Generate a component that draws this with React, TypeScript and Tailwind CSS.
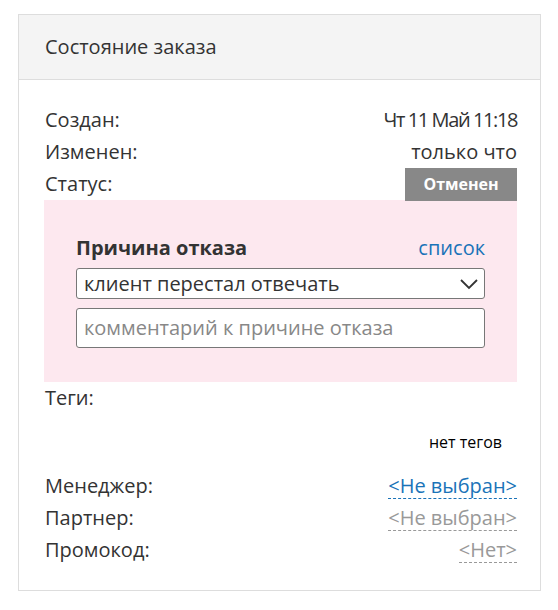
const font = { fontFamily: '"Open Sans", Lato, sans-serif' }

function Row({ label, children }: { label: string; children: React.ReactNode }) {
  return (
    <div className="flex items-center justify-between h-8">
      <span>{label}</span>
      {children}
    </div>
  )
}

export default function App() {
  return (
    <div className="bg-white w-[558px] h-[610px] pt-[14px] pl-[18px]" style={font}>
      <div className="w-[523px] h-[577px] border border-[#dddddd] text-[20px] text-[#333333]">
        <div className="h-[65px] bg-[#f4f4f4] border-b border-[#dddddd] pl-[26px] flex items-center">
          Состояние заказа
        </div>
        <div className="pr-[23px] pl-[25px] pt-[24px]">
          <div className="pl-px">
            <Row label="Создан:">
              <span className="tracking-[-1.4px]">Чт 11 Май 11:18</span>
            </Row>
            <Row label="Изменен:">
              <span>только что</span>
            </Row>
            <Row label="Статус:">
              <span className="bg-[#888888] text-white font-bold text-[16px] w-[112px] h-[33px] flex items-center justify-center">
                Отменен
              </span>
            </Row>
          </div>
          <div className="bg-[#fde8ef] h-[182px] pt-[33px] pl-[32px] pr-[32px]">
            <div className="flex items-center justify-between h-[30px]">
              <span className="font-bold">Причина отказа</span>
              <span className="text-[#1a73b8]">список</span>
            </div>
            <div className="mt-[5px] h-[31px] bg-white border border-[#777777] rounded-[3px] flex items-center justify-between pl-[7px] pr-[6px]">
              <span>клиент перестал отвечать</span>
              <svg width="18" height="18" viewBox="0 0 18 18" fill="none" stroke="#333333" strokeWidth="1.8">
                <path d="M1 5l8 8 8-8" />
              </svg>
            </div>
            <div className="mt-[9px] h-[40px] bg-white border border-[#777777] rounded-[3px] flex items-center pl-[7px] text-[#888888]">
              комментарий к причине отказа
            </div>
          </div>
          <div className="pl-px">
            <div className="h-8 flex items-center">Теги:</div>
            <div className="flex justify-end pr-[15px] h-[56px] items-center text-[16px] text-black">нет тегов</div>
            <Row label="Менеджер:">
              <span className="text-[#1a73b8] border-b border-dashed border-[#1a73b8] leading-[24px]">&lt;Не выбран&gt;</span>
            </Row>
            <Row label="Партнер:">
              <span className="text-[#999999] border-b border-dashed border-[#999999] leading-[24px]">&lt;Не выбран&gt;</span>
            </Row>
            <Row label="Промокод:">
              <span className="text-[#999999] border-b border-dashed border-[#999999] leading-[24px]">&lt;Нет&gt;</span>
            </Row>
          </div>
        </div>
      </div>
    </div>
  )
}
